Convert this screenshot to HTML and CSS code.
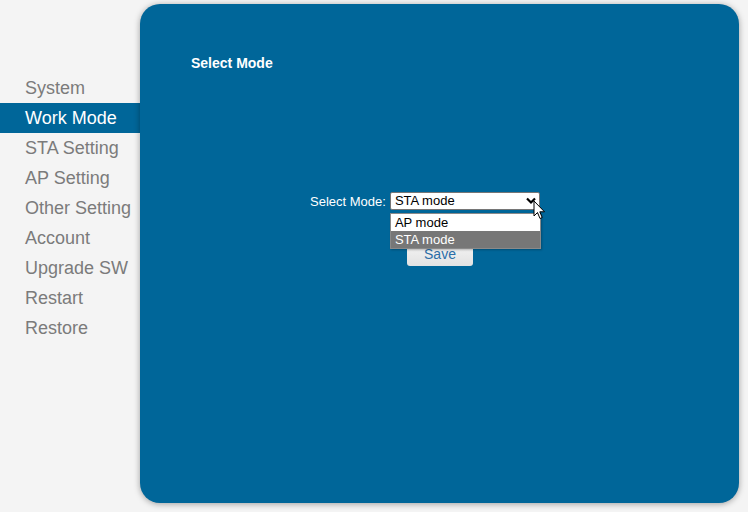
FILE: index.html
```html
<!DOCTYPE html>
<html>
<head>
<meta charset="utf-8">
<link rel="stylesheet" href="styles.css">
</head>
<body>
<div class="page">
  <nav class="sidebar">
    <div class="nav-item">System</div>
    <div class="nav-item active">Work Mode</div>
    <div class="nav-item">STA Setting</div>
    <div class="nav-item">AP Setting</div>
    <div class="nav-item">Other Setting</div>
    <div class="nav-item">Account</div>
    <div class="nav-item">Upgrade SW</div>
    <div class="nav-item">Restart</div>
    <div class="nav-item">Restore</div>
  </nav>
  <main class="panel">
    <h1 class="title">Select Mode</h1>
    <div class="form">
      <div class="row">
        <span class="label">Select Mode:</span>
        <div class="select">
          <span class="select-value">STA mode</span>
          <svg class="chevron" width="10" height="8" viewBox="0 0 10 8"><path d="M1 1.5 L5 5.5 L9 1.5" fill="none" stroke="#000" stroke-width="2.2"/></svg>
          <div class="options">
            <div class="option">AP mode</div>
            <div class="option selected">STA mode</div>
          </div>
          <svg class="cursor" width="13" height="20" viewBox="0 0 13 20"><path d="M1 1 L1 16 L4.5 12.5 L7 18.5 L9.2 17.5 L6.8 11.8 L11.5 11.8 Z" fill="#fff" stroke="#000" stroke-width="1" stroke-linejoin="round"/></svg>
        </div>
      </div>
      <button class="save">Save</button>
    </div>
  </main>
</div>
</body>
</html>
```

FILE: styles.css
```css
html, body {
  margin: 0;
  padding: 0;
  background: #f4f4f4;
  font-family: "Liberation Sans", Arial, sans-serif;
}
.page {
  display: flex;
  width: 748px;
  height: 512px;
}
.sidebar {
  width: 140px;
  flex: none;
  padding-top: 73px;
  box-sizing: border-box;
}
.nav-item {
  height: 30px;
  line-height: 30px;
  padding-left: 25px;
  font-size: 18px;
  color: #7b7b7b;
  white-space: nowrap;
}
.nav-item.active {
  background: #006699;
  color: #fff;
}
.panel {
  margin-top: 4px;
  width: 599px;
  height: 499px;
  background: #006699;
  border-radius: 20px;
  box-shadow: 0 1px 6px rgba(0,0,0,0.35);
  box-sizing: border-box;
  padding: 50px 0 0 51px;
}
.title {
  margin: 0;
  font-size: 14px;
  line-height: 18px;
  font-weight: bold;
  color: #fff;
}
.form {
  margin-top: 120px;
  margin-left: -51px;
  display: flex;
  flex-direction: column;
  align-items: center;
}
.row {
  display: flex;
  align-items: center;
  padding-left: 170px;
  align-self: flex-start;
}
.label {
  color: #fff;
  font-size: 13px;
  margin-right: 4px;
}
.select {
  position: relative;
  width: 150px;
  height: 18px;
  box-sizing: border-box;
  background: #fff;
  border: 1px solid #767676;
  border-radius: 2px;
  font-size: 13px;
  line-height: 16px;
  color: #000;
  padding-left: 4px;
}
.chevron {
  position: absolute;
  right: 3px;
  top: 4px;
}
.options {
  position: absolute;
  left: -1px;
  top: 20px;
  width: 151px;
  box-sizing: border-box;
  background: #fff;
  border: 1px solid #8a8a8a;
  box-shadow: 1px 1px 2px rgba(0,0,0,0.25);
  z-index: 2;
}
.option {
  height: 17px;
  line-height: 17px;
  padding-left: 4px;
  font-size: 13px;
  color: #000;
}
.option.selected {
  background: #777;
  color: #fff;
}
.cursor {
  position: absolute;
  left: 142px;
  top: 7px;
  z-index: 3;
}
.save {
  margin-top: 31px;
  width: 66px;
  height: 25px;
  border: none;
  border-radius: 3px;
  background: linear-gradient(#f6f6f6, #e2e2e2);
  color: #2b6ea8;
  font-family: "Liberation Sans", Arial, sans-serif;
  font-size: 14px;
  padding: 0;
  margin-left: 1px;
}
```
